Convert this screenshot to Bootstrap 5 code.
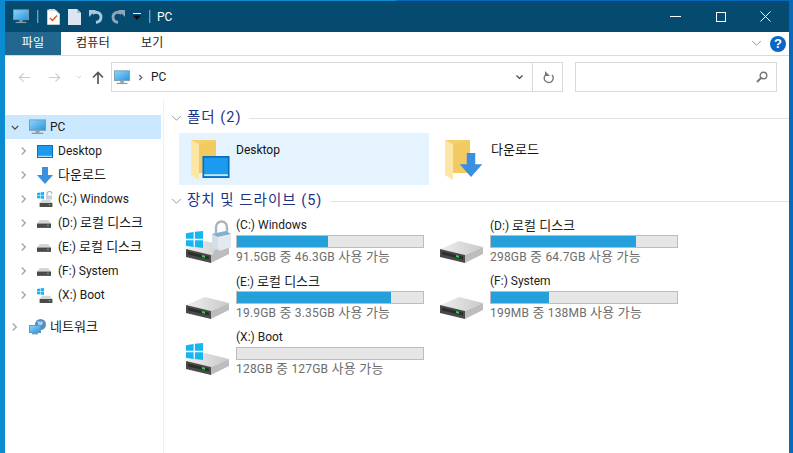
<!DOCTYPE html>
<html lang="ko">
<head>
    <meta charset="UTF-8">
    <title>PC</title>
    <link href="https://cdn.jsdelivr.net/npm/bootstrap@5.3.0/dist/css/bootstrap.min.css" rel="stylesheet">
    <style>
        html, body { height: 100%; overflow: hidden; }
        body { background: linear-gradient(90deg, #0a8bd2 50%, #0868bb 50%); font-family: Roboto, "Noto Sans CJK KR", sans-serif; font-size: 12px; color: #1a1a1a; padding: 1px 4px 0 5px; }
        .ko { font-size: 13px; }
        .win { height: 452px; background: #fff; }
        .title-bar { height: 31px; background: #044b6f; color: #fff; padding: 0 1px 0 8px; gap: 8px; }
        .sep { width: 1px; height: 13px; background: #7d9db0; border-right: 1px solid #2b6888; box-sizing: content-box; }
        .title-text { margin-left: -2px; }
        .win-btn { width: 45px; height: 31px; }
        .tab-strip { height: 24px; border-bottom: 1px solid #dadada; }
        .tab-item { height: 23px; padding: 0 15px; line-height: 23px; color: #222; letter-spacing: .3px; }
        .tab-item.on { background: #21678f; color: #fff; width: 56px; padding: 0; text-align: center; }
        .tab-item.last { padding-left: 16px; }
        .help-dot { width: 16px; height: 16px; border-radius: 50%; background: #0a66c2; color: #fff; font-weight: 700; font-size: 13px; line-height: 16px; text-align: center; margin: 0 3px 0 8px; font-family: "Liberation Sans", sans-serif; }
        .addr-row { height: 44px; padding-top: 6px; }
        .nav-btns { width: 106px; height: 30px; padding-left: 13px; }
        .back-ic { margin-right: 17px; }
        .fwd-ic { margin-right: 15px; }
        .drop-ic { margin-right: 10px; }
        .addr-box { width: 452px; height: 30px; border: 1px solid #d9d9d9; }
        .addr-main { padding-left: 2px; }
        .addr-end { width: 30px; border-left: 1px solid #d9d9d9; }
        .search-box { width: 202px; height: 30px; border: 1px solid #d9d9d9; margin-left: 12px; padding-right: 8px; }
        .main-area { height: 353px; }
        .side-pane { width: 159px; padding-top: 15px; border-right: 1px solid #f0f0f0; margin-right: 15px; flex-shrink: 0; }
        .tree-item { height: 24px; }
        .tree-item.on { background: #cce8ff; width: 156px; }
        .tree-chev { width: 32px; padding-left: 15px; }
        .tree-item.top .tree-chev { width: 8px; padding-left: 6px; box-sizing: content-box; }
        .tree-ico { width: 21px; }
        .tree-item.top .tree-ico { margin-left: 10px; }
        .net-item { margin-top: 8px; }
        .content-pane { padding-top: 6px; min-width: 0; }
        .group-head { height: 22px; padding-top: 2px; margin-left: -8px; font-size: 14.5px; color: #1e3287; letter-spacing: 1px; }
        .group-head svg { margin-right: 5px; }
        .group-line { height: 1px; background: #e2e2e2; margin-left: 8px; }
        .tile-grid { display: grid; grid-template-columns: 254px 254px; padding-top: 5px; }
        .folder-tile { height: 52px; width: 250px; padding: 5px 0 0 12px; }
        .folder-tile.on { background: #e5f3ff; }
        .tile-name { padding-top: 3px; color: #111; }
        .tile-name.ko { padding-top: 2px; }
        .drive-grid { display: grid; grid-template-columns: 254px 254px; padding-top: 6px; }
        .drive-tile { height: 56px; padding-left: 7px; }
        .drive-ico { width: 44px; padding-top: 8px; flex-shrink: 0; }
        .drive-text { width: 190px; padding-left: 6px; box-sizing: content-box; }
        .drive-name { height: 17px; line-height: 17px; color: #222; }
        .use-bar { height: 13px; width: 188px; background: #e6e6e6; border: 1px solid #bcbcbc; margin-top: 1px; }
        .use-fill { height: 100%; background: #26a0da; }
        .drive-sub { color: #6d6d6d; line-height: 17px; white-space: nowrap; letter-spacing: .2px; }
    </style>
</head>
<body>
<svg width="0" height="0" class="position-absolute">
    <defs>
        <linearGradient id="scr" x1="0" y1="0" x2="1" y2="1"><stop offset="0" stop-color="#8fd6fb"/><stop offset="1" stop-color="#2a94e0"/></linearGradient>
        <linearGradient id="drv" x1="0" y1="0" x2="1" y2="0"><stop offset="0" stop-color="#efefef"/><stop offset="1" stop-color="#c9c9c9"/></linearGradient>
        <symbol id="i-pc" viewBox="0 0 18 16"><rect x=".5" y=".5" width="17" height="11" fill="url(#scr)" stroke="#7a9ab0"/><rect x="7" y="12" width="4" height="2" fill="#8a9aa6"/><rect x="3" y="14" width="12" height="1.4" fill="#8a9aa6"/></symbol>
        <symbol id="i-desk" viewBox="0 0 16 13"><rect x=".5" y=".5" width="15" height="12" fill="#1a9bf0" stroke="#0b6fb8"/><rect x="1" y="10.8" width="14" height="1" fill="#fff" opacity=".8"/></symbol>
        <symbol id="i-down" viewBox="0 0 16 17"><path d="M5 0h6v8h5l-8 9-8-9h5z" fill="#3a8fe0"/></symbol>
        <symbol id="i-disk" viewBox="0 0 16 10"><path d="M3 1h10l3 4H0z" fill="#d6d6d6"/><rect x="0" y="5" width="16" height="5" fill="#4a4a4a"/><rect x="11.5" y="6.5" width="2" height="1.5" fill="#3fd04a"/></symbol>
        <symbol id="i-win" viewBox="0 0 8 8"><path d="M0 1l3.6-.5v3.2H0zM4.2.4L8 0v3.7H4.2zM0 4.300h3.6v3.2L0 7zM4.2 4.300H8V8l-3.8-.5z" fill="#19b5f1"/></symbol>
        <symbol id="i-drive" viewBox="0 0 43 22"><path d="M0 8L19 0l24 6-18 8z" fill="url(#drv)"/><path d="M0 8l25 6v8L0 16z" fill="#4a4a4a"/><path d="M25 14l18-8v7l-18 9z" fill="#bdbdbd"/><path d="M2 10.500l21 5v3L2 13.500z" fill="#2e2e2e"/><path d="M16 14l3 .7v2l-3-.7z" fill="#35d24a"/></symbol>
        <symbol id="i-lock" viewBox="0 0 20 38"><path d="M4 14V7a5.500 5.500 0 0111 0v5" fill="none" stroke="#a9b4bd" stroke-width="2.400"/><path d="M0 14l14-3 5 3v13L6 31 0 28z" fill="#d4dee6"/><path d="M0 14l14-3 5 3-13 3z" fill="#7fb0d0"/><path d="M6 17l13-3v13L6 31z" fill="#e3e9ee"/><circle cx="5" cy="33" r="3.600" fill="#bdbdbd"/></symbol>
        <symbol id="i-folder" viewBox="0 0 25 40"><path d="M0 0h25v33H9z" fill="#f5cf6c"/><path d="M8 5l17-5v33H8z" fill="#f3ca62"/><path d="M0 0l8 4v36L0 35z" fill="#fbe6a6"/></symbol>
        <symbol id="i-net" viewBox="0 0 18 16"><circle cx="11.5" cy="5.5" r="5.5" fill="#4f8fc4"/><path d="M8 2c2 1 4 0 6 1l-1 3-3 1z" fill="#a8d3ee"/><rect x=".5" y="6.5" width="11" height="7" fill="url(#scr)" stroke="#5d9ac6"/><rect x="3" y="14" width="6" height="1.4" fill="#6a9fc4"/></symbol>
        <symbol id="i-chev" viewBox="0 0 8 10"><path d="M2 1l4 4-4 4" fill="none" stroke="#a6a6a6" stroke-width="1.6"/></symbol>
        <symbol id="i-chev-d" viewBox="0 0 10 8"><path d="M1 2l4 4 4-4" fill="none" stroke="#444" stroke-width="1.6"/></symbol>
        <symbol id="i-chev-l" viewBox="0 0 12 8"><path d="M1 1l5 5 5-5" fill="none" stroke="#8b8b8b" stroke-width="1"/></symbol>
    </defs>
</svg>

<div class="win d-flex flex-column">
    <!-- title bar -->
    <div class="title-bar d-flex align-items-center flex-shrink-0">
        <svg width="16" height="15"><use href="#i-pc"/></svg>
        <span class="sep"></span>
        <svg width="13" height="16" viewBox="0 0 13 16"><path d="M.5 1h8l4 4v10.500H.5z" fill="#fff" stroke="#ccc"/><rect x="2" y="0" width="6" height="2" fill="#d9d9d9"/><path d="M3 9l2.500 2.500L10 6.500" fill="none" stroke="#e0562a" stroke-width="1.500"/></svg>
        <svg width="13" height="16" viewBox="0 0 13 16"><path d="M0 0h9l4 4v12H0z" fill="#dbe6f2"/><path d="M9 0v4h4z" fill="#a9bdd1"/></svg>
        <svg width="14" height="15" viewBox="0 0 14 15"><path d="M0 1h7L0 8z" fill="#a9c8de"/><path d="M3.500 4.500C7 2 12 3.500 12 8c0 3-2 5-5 5.500" fill="none" stroke="#a9c8de" stroke-width="2.800"/></svg>
        <svg width="14" height="15" viewBox="0 0 14 15"><path d="M14 1H7l7 7z" fill="#8ea6b8"/><path d="M10.500 4.500C7 2 2 3.500 2 8c0 3 2 5 5 5.500" fill="none" stroke="#8ea6b8" stroke-width="2.800"/></svg>
        <svg width="8" height="7" viewBox="0 0 8 7"><rect width="8" height="1" fill="#fff"/><path d="M0 2.500h8L4 7z" fill="#111"/></svg>
        <span class="sep"></span>
        <span class="title-text flex-grow-1">PC</span>
        <div class="d-flex">
            <span class="win-btn d-flex align-items-center justify-content-center"><svg width="11" height="1"><rect width="11" height="1" fill="#fff"/></svg></span>
            <span class="win-btn d-flex align-items-center justify-content-center"><svg width="10" height="10"><rect x=".5" y=".5" width="9" height="9" fill="none" stroke="#fff"/></svg></span>
            <span class="win-btn d-flex align-items-center justify-content-center"><svg width="11" height="11"><path d="M.5.5l10 10M10.500.5l-10 10" stroke="#fff"/></svg></span>
        </div>
    </div>

    <!-- ribbon tabs -->
    <div class="tab-strip d-flex align-items-center flex-shrink-0">
        <div class="tab-item on">파일</div>
        <div class="tab-item">컴퓨터</div>
        <div class="tab-item last">보기</div>
        <svg width="11" height="7" class="ms-auto"><use href="#i-chev-l"/></svg>
        <div class="help-dot">?</div>
    </div>

    <!-- address row -->
    <div class="addr-row d-flex flex-shrink-0">
        <div class="nav-btns d-flex align-items-center">
            <svg width="13" height="11" viewBox="0 0 14 11" class="back-ic"><path d="M13 5.500H2M6 1L1.500 5.500 6 10" fill="none" stroke="#ccc" stroke-width="1.300"/></svg>
            <svg width="13" height="11" viewBox="0 0 14 11" class="fwd-ic"><path d="M1 5.500h11M8 1l4.500 4.500L8 10" fill="none" stroke="#ccc" stroke-width="1.300"/></svg>
            <svg width="6" height="4" viewBox="0 0 10 8" class="drop-ic"><path d="M1 2l4 4 4-4" fill="none" stroke="#ccc" stroke-width="1.600"/></svg>
            <svg width="12" height="13" viewBox="0 0 12 13"><path d="M6 13V2M1 6.500L6 1.500l5 5" fill="none" stroke="#555" stroke-width="1.700"/></svg>
        </div>
        <div class="addr-box d-flex align-items-stretch">
            <div class="addr-main d-flex align-items-center flex-grow-1">
                <svg width="16" height="15" class="me-2"><use href="#i-pc"/></svg>
                <svg width="5" height="7" class="me-2" viewBox="0 0 8 10"><path d="M2 1l4 4-4 4" fill="none" stroke="#666" stroke-width="2"/></svg>
                <span>PC</span>
                <svg width="9" height="6" class="ms-auto me-2"><use href="#i-chev-d"/></svg>
            </div>
            <div class="addr-end d-flex align-items-center justify-content-center">
                <svg width="12" height="13" viewBox="0 0 12 13"><path d="M4 3.500a4.500 4.500 0 106 .5" fill="none" stroke="#777" stroke-width="1.400"/><path d="M3 0v5h5z" fill="#777"/></svg>
            </div>
        </div>
        <div class="search-box d-flex align-items-center justify-content-end">
            <svg width="12" height="12" viewBox="0 0 12 12"><circle cx="7.500" cy="4.500" r="3.300" fill="none" stroke="#777" stroke-width="1.400"/><path d="M5 7l-4 4" stroke="#777" stroke-width="2"/></svg>
        </div>
    </div>

    <!-- body -->
    <div class="main-area d-flex flex-grow-1">
        <div class="side-pane">
            <div class="tree-item top on d-flex align-items-center">
                <div class="tree-chev d-flex"><svg width="9" height="7"><use href="#i-chev-d"/></svg></div>
                <div class="tree-ico"><svg width="17" height="16" class="d-block"><use href="#i-pc"/></svg></div>
                <span>PC</span>
            </div>
            <div class="tree-item d-flex align-items-center"><div class="tree-chev d-flex"><svg width="7" height="10"><use href="#i-chev"/></svg></div><div class="tree-ico"><svg width="16" height="13" class="d-block"><use href="#i-desk"/></svg></div><span>Desktop</span></div>
            <div class="tree-item d-flex align-items-center"><div class="tree-chev d-flex"><svg width="7" height="10"><use href="#i-chev"/></svg></div><div class="tree-ico"><svg width="16" height="17" class="d-block"><use href="#i-down"/></svg></div><span class="ko">다운로드</span></div>
            <div class="tree-item d-flex align-items-center"><div class="tree-chev d-flex"><svg width="7" height="10"><use href="#i-chev"/></svg></div><div class="tree-ico"><svg width="16" height="16" viewBox="0 0 16 16" class="d-block"><use href="#i-win" width="7" height="7" y="1"/><use href="#i-disk" width="14" height="8" x="2" y="8"/><path d="M10 5V3a2.500 2.500 0 015 0" fill="none" stroke="#a7b3bd" stroke-width="1.200"/><rect x="9" y="4.500" width="6" height="4" fill="#c5d2dc"/></svg></div><span>(C:) Windows</span></div>
            <div class="tree-item d-flex align-items-center"><div class="tree-chev d-flex"><svg width="7" height="10"><use href="#i-chev"/></svg></div><div class="tree-ico"><svg width="14" height="9" class="d-block"><use href="#i-disk"/></svg></div><span>(D:) <span class="ko">로컬 디스크</span></span></div>
            <div class="tree-item d-flex align-items-center"><div class="tree-chev d-flex"><svg width="7" height="10"><use href="#i-chev"/></svg></div><div class="tree-ico"><svg width="14" height="9" class="d-block"><use href="#i-disk"/></svg></div><span>(E:) <span class="ko">로컬 디스크</span></span></div>
            <div class="tree-item d-flex align-items-center"><div class="tree-chev d-flex"><svg width="7" height="10"><use href="#i-chev"/></svg></div><div class="tree-ico"><svg width="14" height="9" class="d-block"><use href="#i-disk"/></svg></div><span>(F:) System</span></div>
            <div class="tree-item d-flex align-items-center"><div class="tree-chev d-flex"><svg width="7" height="10"><use href="#i-chev"/></svg></div><div class="tree-ico"><svg width="16" height="16" viewBox="0 0 16 16" class="d-block"><use href="#i-win" width="7" height="7" y="1"/><use href="#i-disk" width="14" height="8" x="2" y="8"/></svg></div><span>(X:) Boot</span></div>
            <div class="tree-item top net-item d-flex align-items-center">
                <div class="tree-chev d-flex"><svg width="7" height="10"><use href="#i-chev"/></svg></div>
                <div class="tree-ico"><svg width="18" height="16" class="d-block"><use href="#i-net"/></svg></div>
                <span class="ko">네트워크</span>
            </div>
        </div>

        <div class="content-pane flex-grow-1">
            <div class="group-head d-flex align-items-center">
                <svg width="11" height="7"><use href="#i-chev-l"/></svg>
                <span>폴더 (2)</span><div class="group-line flex-grow-1"></div>
            </div>
            <div class="tile-grid">
                <div class="folder-tile on d-flex">
                    <svg width="45" height="42" viewBox="0 0 45 42" class="flex-shrink-0"><use href="#i-folder" width="25" height="40" y="2"/><use href="#i-desk" width="28" height="22" x="11" y="18"/></svg>
                    <div class="tile-name">Desktop</div>
                </div>
                <div class="folder-tile d-flex">
                    <svg width="46" height="42" viewBox="0 0 46 42" class="flex-shrink-0"><use href="#i-folder" width="25" height="40" y="2"/><use href="#i-down" width="24" height="24" x="14" y="15"/></svg>
                    <div class="tile-name ko">다운로드</div>
                </div>
            </div>
            <div class="group-head d-flex align-items-center mt-1">
                <svg width="11" height="7"><use href="#i-chev-l"/></svg>
                <span>장치 및 드라이브 (5)</span><div class="group-line flex-grow-1"></div>
            </div>
            <div class="drive-grid">
                <div class="drive-tile d-flex">
                    <div class="drive-ico"><svg width="46" height="44" viewBox="0 0 46 44" class="d-block" style="margin-top:-5px"><use href="#i-drive" width="43" height="22" y="21"/><use href="#i-win" width="17" height="17" y="11"/><use href="#i-lock" width="20" height="38" x="26"/></svg></div>
                    <div class="drive-text"><div class="drive-name">(C:) Windows</div><div class="use-bar"><div class="use-fill" style="width:48.7%"></div></div><div class="drive-sub">91.5GB <span class="ko">중</span> 46.3GB <span class="ko">사용 가능</span></div></div>
                </div>
                <div class="drive-tile d-flex">
                    <div class="drive-ico"><svg width="43" height="22" class="d-block" style="margin-top:16px"><use href="#i-drive"/></svg></div>
                    <div class="drive-text"><div class="drive-name">(D:) <span class="ko">로컬 디스크</span></div><div class="use-bar"><div class="use-fill" style="width:78%"></div></div><div class="drive-sub">298GB <span class="ko">중</span> 64.7GB <span class="ko">사용 가능</span></div></div>
                </div>
                <div class="drive-tile d-flex">
                    <div class="drive-ico"><svg width="43" height="22" class="d-block" style="margin-top:16px"><use href="#i-drive"/></svg></div>
                    <div class="drive-text"><div class="drive-name">(E:) <span class="ko">로컬 디스크</span></div><div class="use-bar"><div class="use-fill" style="width:82.6%"></div></div><div class="drive-sub">19.9GB <span class="ko">중</span> 3.35GB <span class="ko">사용 가능</span></div></div>
                </div>
                <div class="drive-tile d-flex">
                    <div class="drive-ico"><svg width="43" height="22" class="d-block" style="margin-top:16px"><use href="#i-drive"/></svg></div>
                    <div class="drive-text"><div class="drive-name">(F:) System</div><div class="use-bar"><div class="use-fill" style="width:31%"></div></div><div class="drive-sub">199MB <span class="ko">중</span> 138MB <span class="ko">사용 가능</span></div></div>
                </div>
                <div class="drive-tile d-flex">
                    <div class="drive-ico"><svg width="43" height="39" viewBox="0 0 43 39" class="d-block" style="margin-top:-1px"><use href="#i-drive" width="43" height="22" y="17"/><use href="#i-win" width="17" height="17" y="7"/></svg></div>
                    <div class="drive-text"><div class="drive-name">(X:) Boot</div><div class="use-bar"></div><div class="drive-sub">128GB <span class="ko">중</span> 127GB <span class="ko">사용 가능</span></div></div>
                </div>
            </div>
        </div>
    </div>
</div>
<script src="https://cdn.jsdelivr.net/npm/bootstrap@5.3.0/dist/js/bootstrap.bundle.min.js"></script>
</body>
</html>
